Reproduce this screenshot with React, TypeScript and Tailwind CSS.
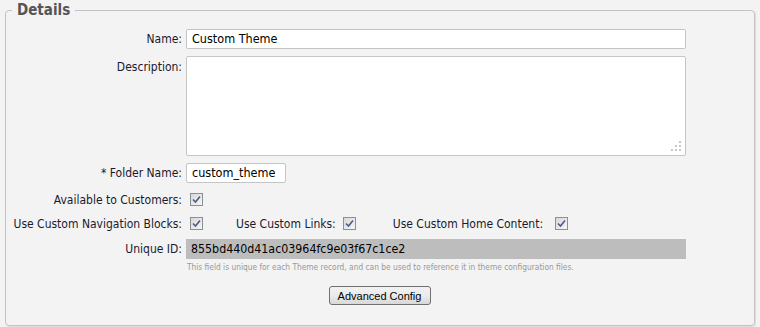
import React from "react";

const font = { fontFamily: '"DejaVu Sans Condensed", "DejaVu Sans", Tahoma, sans-serif' };

function Check() {
  return (
    <span className="inline-flex h-[13px] w-[13px] items-center justify-center border border-[#8e8f8f] bg-gradient-to-br from-[#d8d8d8] to-[#f6f6f6]">
      <svg width="9" height="9" viewBox="0 0 9 9">
        <path d="M1 4.5 L3.5 7 L8 1.5" fill="none" stroke="#4b5b8c" strokeWidth="1.6" />
      </svg>
    </span>
  );
}

function Label({ children, top = false }: { children: React.ReactNode; top?: boolean }) {
  return (
    <div className={`w-[176px] shrink-0 text-right ${top ? "pt-[2px]" : ""}`}>{children}</div>
  );
}

export default function App() {
  return (
    <div className="w-[760px] h-[327px] bg-[#f3f3f3] px-[5px] pt-[1px] text-[12px] text-[#1a1a2e]" style={font}>
      <fieldset className="border border-[#c3c3c3] rounded-[4px] h-[325px] shadow-[1px_1px_0_#dedede]">
        <legend className="ml-[6px] px-[5px] text-[15px] font-bold text-[#555] leading-[18px]">Details</legend>
        <div className="flex flex-col">
          <div className="flex items-center gap-[4px] mt-[10px] h-[20px]">
            <Label>Name:</Label>
            <div className="w-[500px] h-[20px] bg-white border border-[#c5c5c5] rounded-[2px] px-[5px] text-[12.5px] text-black leading-[18px]">Custom Theme</div>
          </div>
          <div className="flex items-start gap-[4px] mt-[7px]">
            <Label top>Description:</Label>
            <div className="relative w-[500px] h-[100px] bg-white border border-[#c5c5c5] rounded-[2px]">
              <svg className="absolute right-[3px] bottom-[3px]" width="11" height="11" viewBox="0 0 11 11">
                <g fill="#c8c8c8">
                  <rect x="8" y="0" width="2" height="2" />
                  <rect x="4" y="4" width="2" height="2" />
                  <rect x="8" y="4" width="2" height="2" />
                  <rect x="0" y="8" width="2" height="2" />
                  <rect x="4" y="8" width="2" height="2" />
                  <rect x="8" y="8" width="2" height="2" />
                </g>
              </svg>
            </div>
          </div>
          <div className="flex items-center gap-[4px] mt-[7px] h-[20px]">
            <Label>* Folder Name:</Label>
            <div className="w-[100px] h-[20px] bg-white border border-[#c5c5c5] rounded-[2px] px-[5px] text-[12.5px] text-black leading-[18px]">custom_theme</div>
          </div>
          <div className="flex items-center gap-[4px] mt-[7px] h-[20px]">
            <Label>Available to Customers:</Label>
            <span className="ml-[4px]"><Check /></span>
          </div>
          <div className="flex items-center gap-[4px] mt-[4px] h-[20px]">
            <Label>Use Custom Navigation Blocks:</Label>
            <span className="ml-[4px]"><Check /></span>
            <span className="ml-[29px]">Use Custom Links:</span>
            <span className="ml-[3px]"><Check /></span>
            <span className="ml-[33px]">Use Custom Home Content:</span>
            <span className="ml-[8px]"><Check /></span>
          </div>
          <div className="flex items-center gap-[4px] mt-[5px] h-[20px]">
            <Label>Unique ID:</Label>
            <div className="w-[500px] h-[20px] bg-[#bdbdbd] px-[5px] text-[12.3px] text-black leading-[20px]">855bd440d41ac03964fc9e03f67c1ce2</div>
          </div>
          <div className="pl-[181px] mt-[3px] text-[8.3px] text-[#999] leading-[11px]">
            This field is unique for each Theme record, and can be used to reference it in theme configuration files.
          </div>
          <div className="flex justify-center mt-[13px] pr-[1px]">
            <button className="w-[102px] h-[19px] border border-[#707070] rounded-[3px] bg-gradient-to-b from-[#f2f2f2] via-[#ebebeb] to-[#d8d8d8] text-[11px] text-black leading-[16px]" style={{ fontFamily: '"Liberation Sans", Arial, sans-serif' }}>
              Advanced Config
            </button>
          </div>
        </div>
      </fieldset>
    </div>
  );
}
